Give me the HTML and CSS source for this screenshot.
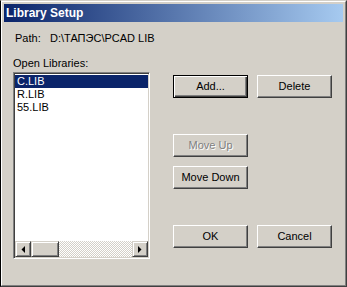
FILE: index.html
```html
<!DOCTYPE html>
<html>
<head>
<meta charset="utf-8">
<link rel="stylesheet" href="styles.css">
</head>
<body>
<div class="window">
  <div class="frame">
    <div class="titlebar"><span class="title">Library Setup</span></div>
    <div class="content">
      <div class="path-row"><span class="path-label">Path:</span><span>D:\ТАПЭС\PCAD LIB</span></div>
      <div class="main">
        <div class="left">
          <div class="label">Open Libraries:</div>
          <div class="listbox">
            <div class="items">
              <div class="item selected">C.LIB</div>
              <div class="item">R.LIB</div>
              <div class="item">55.LIB</div>
            </div>
            <div class="hscroll">
              <div class="sbtn"><svg width="4" height="7" viewBox="0 0 4 7"><path d="M4 0 L4 7 L0.5 3.5 Z" fill="#000"/></svg></div>
              <div class="thumb"></div>
              <div class="track"></div>
              <div class="sbtn"><svg width="4" height="7" viewBox="0 0 4 7"><path d="M0 0 L0 7 L3.5 3.5 Z" fill="#000"/></svg></div>
            </div>
          </div>
        </div>
        <div class="buttons">
          <div class="btn-row">
            <div class="btn default"><span>Add...</span></div>
            <div class="btn"><span>Delete</span></div>
          </div>
          <div class="btn-row gap-big">
            <div class="btn disabled"><span>Move Up</span></div>
          </div>
          <div class="btn-row gap-small">
            <div class="btn"><span>Move Down</span></div>
          </div>
          <div class="btn-row gap-big">
            <div class="btn"><span>OK</span></div>
            <div class="btn"><span>Cancel</span></div>
          </div>
        </div>
      </div>
    </div>
  </div>
</div>
</body>
</html>
```
FILE: styles.css
```css
html, body {
  margin: 0;
  padding: 0;
  background: #d4d0c8;
}
body {
  font-family: "Liberation Sans", Arial, sans-serif;
  font-size: 11px;
  color: #000;
}
.window {
  width: 347px;
  height: 287px;
  box-sizing: border-box;
  border-left: 1px solid #000;
  border-top: 1px solid #d4d0c8;
  border-right: 1px solid #404040;
  border-bottom: 1px solid #404040;
  background: #d4d0c8;
}
.frame {
  height: 100%;
  box-sizing: border-box;
  border-left: 1px solid #fff;
  border-top: 1px solid #fff;
  border-right: 1px solid #808080;
  border-bottom: 1px solid #808080;
  padding: 2px;
  display: flex;
  flex-direction: column;
}
.titlebar {
  height: 18px;
  background: linear-gradient(to right, #0a246a, #a6caf0);
  display: flex;
  align-items: center;
  padding-left: 2px;
}
.title {
  color: #fff;
  font-weight: bold;
  font-size: 12px;
  line-height: 18px;
}
.content {
  display: flex;
  flex-direction: column;
  padding: 10px 0 0 9px;
}
.path-row {
  display: flex;
  line-height: 13px;
  height: 13px;
  margin-left: 2px;
}
.path-label {
  width: 35px;
}
.main {
  display: flex;
  margin-top: 12px;
}
.left {
  display: flex;
  flex-direction: column;
}
.label {
  line-height: 13px;
  height: 13px;
}
.listbox {
  margin-top: 2px;
  width: 137px;
  height: 187px;
  box-sizing: border-box;
  border-left: 1px solid #808080;
  border-top: 1px solid #808080;
  border-right: 1px solid #fff;
  border-bottom: 1px solid #fff;
  box-shadow: inset 1px 1px 0 #404040, inset -1px -1px 0 #d4d0c8;
  padding: 1px;
  background: #fff;
  display: flex;
  flex-direction: column;
}
.items {
  flex: 1;
  padding-top: 1px;
}
.item {
  height: 13px;
  line-height: 13px;
  padding-left: 2px;
}
.item.selected {
  background: #0a246a;
  color: #fff;
}
.hscroll {
  height: 16px;
  display: flex;
}
.sbtn, .thumb {
  width: 16px;
  height: 16px;
  box-sizing: border-box;
  background: #d4d0c8;
  border-left: 1px solid #d4d0c8;
  border-top: 1px solid #d4d0c8;
  border-right: 1px solid #404040;
  border-bottom: 1px solid #404040;
  box-shadow: inset 1px 1px 0 #fff, inset -1px -1px 0 #808080;
  display: flex;
  align-items: center;
  justify-content: center;
}
.thumb {
  width: 28px;
}
.track {
  flex: 1;
  background: repeating-conic-gradient(#d4d0c8 0 25%, #fff 0 50%) 0 0 / 2px 2px;
}
.buttons {
  display: flex;
  flex-direction: column;
  margin-left: 23px;
  padding-top: 18px;
}
.btn-row {
  display: flex;
  gap: 9px;
}
.gap-big {
  margin-top: 36px;
}
.gap-small {
  margin-top: 9px;
}
.btn {
  width: 75px;
  height: 23px;
  box-sizing: border-box;
  background: #d4d0c8;
  border-left: 1px solid #fff;
  border-top: 1px solid #fff;
  border-right: 1px solid #404040;
  border-bottom: 1px solid #404040;
  box-shadow: inset -1px -1px 0 #808080;
  display: flex;
  align-items: center;
  justify-content: center;
  line-height: 13px;
}
.btn.default {
  border: 1px solid #000;
  box-shadow: inset 1px 1px 0 #fff, inset -1px -1px 0 #404040, inset -2px -2px 0 #808080;
}
.btn.disabled {
  color: #808080;
  text-shadow: 1px 1px 0 #fff;
}
```
